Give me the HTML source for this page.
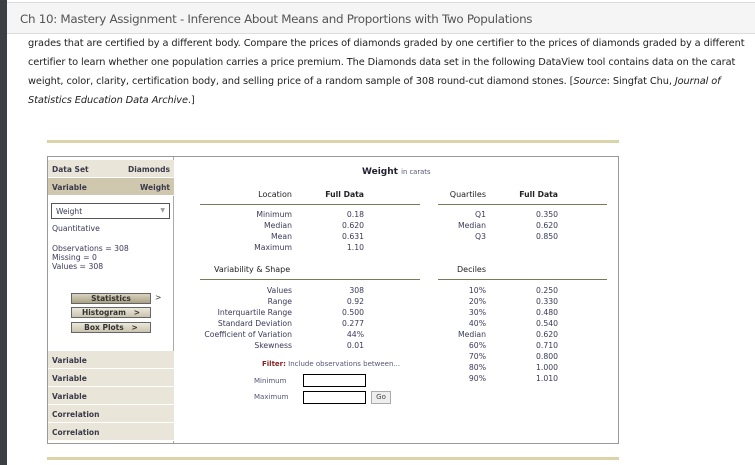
<!DOCTYPE html>
<html><head><style>
*{margin:0;padding:0;box-sizing:border-box}
body{width:755px;height:465px;background:#fff;position:relative;overflow:hidden;font-family:"DejaVu Sans","Liberation Sans",sans-serif;color:#333}
.a{position:absolute;white-space:nowrap}
.p{font-size:9.8px;color:#222;letter-spacing:-0.1px}
.s{font-size:7.7px;color:#3a3a5a}
.r{text-align:right}
.row{position:absolute;left:48px;width:126px;height:18px;font-size:7.5px;font-weight:bold;color:#3a3a4a;padding:5px 4px;border-bottom:1px solid #fff}
.btn{position:absolute;left:71px;width:80px;height:11px;border:1px solid #666;background:linear-gradient(#ece9dc,#c9c3ad);font-size:7.5px;font-weight:bold;color:#333;text-align:center;line-height:9px}
.ln{position:absolute;height:1px;background:#7a7a5a}
</style></head><body>
<div class="a" style="left:0;top:0;width:7px;height:465px;background:#3c3f44"></div>
<div class="a" style="left:7px;top:2px;width:748px;height:1px;background:#ddd"></div>
<div class="a" style="left:7px;top:3px;width:748px;height:31px;background:#f5f5f5;border-bottom:1px solid #ddd"></div>
<div class="a" style="left:20px;top:12px;font-size:11.9px;color:#555;letter-spacing:-0.3px">Ch 10: Mastery Assignment - Inference About Means and Proportions with Two Populations</div>
<div class="a p" style="left:28px;top:38px">grades that are certified by a different body. Compare the prices of diamonds graded by one certifier to the prices of diamonds graded by a different</div>
<div class="a p" style="left:28px;top:57px">certifier to learn whether one population carries a price premium. The Diamonds data set in the following DataView tool contains data on the carat</div>
<div class="a p" style="left:28px;top:76px">weight, color, clarity, certification body, and selling price of a random sample of 308 round-cut diamond stones. [<i>Source</i>: Singfat Chu, <i>Journal of</i></div>
<div class="a p" style="left:28px;top:95px"><i>Statistics Education Data Archive</i>.]</div>
<div class="a" style="left:47px;top:140px;width:572px;height:3px;background:#ddd3a8"></div>
<div class="a" style="left:47px;top:457px;width:572px;height:3px;background:#ddd3a8"></div>
<div class="a" style="left:47px;top:156px;width:572px;height:288px;border:1px solid #999"></div>
<div class="a" style="left:48px;top:157px;width:126px;height:286px;border-right:1px solid #aaa"></div>
<div class="row" style="top:160px;background:#e9e5d9">Data Set<span style="float:right">Diamonds</span></div>
<div class="row" style="top:178px;background:#cfc7ae">Variable<span style="float:right">Weight</span></div>
<div class="a" style="left:51px;top:203px;width:119px;height:16px;border:1px solid #555;background:#fff;font-size:7.5px;color:#3a3a5a;padding:3px 4px">Weight<span style="float:right;color:#999;font-size:6px">▼</span></div>
<div class="a s" style="left:52px;top:224px">Quantitative</div>
<div class="a s" style="left:52px;top:244px">Observations = 308</div>
<div class="a s" style="left:52px;top:253px">Missing = 0</div>
<div class="a s" style="left:52px;top:262px">Values = 308</div>
<div class="btn" style="top:293px;background:linear-gradient(#d9d3bd,#a9a286)">Statistics</div>
<div class="a s" style="left:155px;top:293px;color:#333">&gt;</div>
<div class="btn" style="top:307px">Histogram &nbsp; &gt;</div>
<div class="btn" style="top:322px">Box Plots &nbsp; &gt;</div>
<div class="row" style="top:351px;background:#e9e5d9">Variable</div>
<div class="row" style="top:369px;background:#e9e5d9">Variable</div>
<div class="row" style="top:387px;background:#e9e5d9">Variable</div>
<div class="row" style="top:405px;background:#e9e5d9">Correlation</div>
<div class="row" style="top:423px;background:#e9e5d9">Correlation</div>

<div class="a" style="left:362px;top:167px;font-size:9px;font-weight:bold;color:#223">Weight <span style="font-size:6.8px;color:#557;font-weight:normal">in carats</span></div>
<div class="a s r" style="left:200px;width:92px;top:190px;color:#222;font-size:8px">Location</div>
<div class="a s r" style="left:300px;width:64px;top:190px;color:#222;font-weight:bold">Full Data</div>
<div class="a s r" style="left:430px;width:56px;top:190px;color:#222;font-size:8px">Quartiles</div>
<div class="a s r" style="left:500px;width:58px;top:190px;color:#222;font-weight:bold">Full Data</div>
<div class="ln" style="left:200px;top:204px;width:220px"></div>
<div class="ln" style="left:438px;top:204px;width:169px"></div>
<div class="a s r" style="left:200px;width:92px;top:209px;line-height:11px">Minimum<br>Median<br>Mean<br>Maximum</div>
<div class="a s r" style="left:300px;width:64px;top:209px;line-height:11px">0.18<br>0.620<br>0.631<br>1.10</div>
<div class="a s r" style="left:430px;width:56px;top:209px;line-height:11px">Q1<br>Median<br>Q3</div>
<div class="a s r" style="left:500px;width:58px;top:209px;line-height:11px">0.350<br>0.620<br>0.850</div>
<div class="a s" style="left:214px;top:265px;color:#222;font-size:8px">Variability &amp; Shape</div>
<div class="a s r" style="left:430px;width:56px;top:265px;color:#222;font-size:8px">Deciles</div>
<div class="ln" style="left:200px;top:279px;width:220px"></div>
<div class="ln" style="left:438px;top:279px;width:169px"></div>
<div class="a s r" style="left:190px;width:102px;top:285px;line-height:11px">Values<br>Range<br>Interquartile Range<br>Standard Deviation<br>Coefficient of Variation<br>Skewness</div>
<div class="a s r" style="left:300px;width:64px;top:285px;line-height:11px">308<br>0.92<br>0.500<br>0.277<br>44%<br>0.01</div>
<div class="a s r" style="left:430px;width:56px;top:285px;line-height:11px">10%<br>20%<br>30%<br>40%<br>Median<br>60%<br>70%<br>80%<br>90%</div>
<div class="a s r" style="left:500px;width:58px;top:285px;line-height:11px">0.250<br>0.330<br>0.480<br>0.540<br>0.620<br>0.710<br>0.800<br>1.000<br>1.010</div>
<div class="a s" style="left:262px;top:360px;font-size:7px;color:#557"><b style="color:#822">Filter:</b> Include observations between...</div>
<div class="a s" style="left:254px;top:377px;font-size:7px;color:#557">Minimum</div>
<div class="a s" style="left:254px;top:393px;font-size:7px;color:#557">Maximum</div>
<div class="a" style="left:303px;top:374px;width:63px;height:13px;border:1px solid #000"></div>
<div class="a" style="left:303px;top:391px;width:63px;height:13px;border:1px solid #000"></div>
<div class="a" style="left:371px;top:391px;width:20px;height:13px;border:1px solid #aaa;background:#eee;font-size:7px;color:#444;text-align:center;line-height:11px">Go</div>
</body></html>
